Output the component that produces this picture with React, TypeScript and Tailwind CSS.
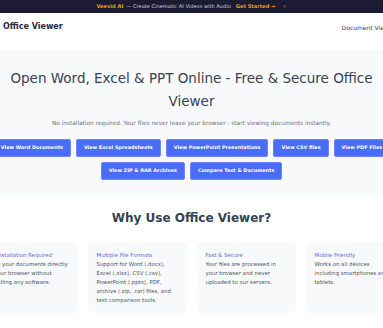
import React from "react";

const actions = [
    "View Word Documents",
    "View Excel Spreadsheets",
    "View PowerPoint Presentations",
    "View CSV files",
    "View PDF Files",
    "View ZIP & RAR Archives",
    "Compare Text & Documents",
];

const features = [
    {
        title: "No Installation Required",
        body: "View your documents directly in your browser without installing any software.",
    },
    {
        title: "Multiple File Formats",
        body: "Support for Word (.docx), Excel (.xlsx), CSV (.csv), PowerPoint (.pptx), PDF, archive (.zip, .rar) files, and text comparison tools.",
    },
    {
        title: "Fast & Secure",
        body: "Your files are processed in your browser and never uploaded to our servers.",
    },
    {
        title: "Mobile Friendly",
        body: "Works on all devices including smartphones and tablets.",
    },
];

export default function App() {
    return (
        <div className="w-[383px] h-[328px] overflow-hidden bg-white font-['DejaVu_Sans',sans-serif] flex flex-col">
            {/* Promo banner */}
            <div className="h-[13px] shrink-0 bg-[#1c1b33] flex items-center justify-center gap-[3px] text-[5.1px] leading-none">
                <span className="font-bold text-[#f59e0b]">Veevid AI</span>
                <span className="text-[#d1d5db]">— Create Cinematic AI Videos with Audio</span>
                <span className="font-bold text-[#f59e0b] ml-[2px]">Get Started →</span>
                <span className="text-[#6b7280] ml-[4px]">×</span>
            </div>

            {/* Header */}
            <header className="h-[28px] shrink-0 flex items-center justify-between pl-[3px]">
                <span className="text-[8px] font-bold text-[#1f2937]">Office Viewer</span>
                <span className="text-[6px] text-[#374151] whitespace-nowrap mr-[-12px]">Document Viewer</span>
            </header>

            {/* Hero */}
            <section className="mt-[10px] shrink-0 bg-[#f8f9fb] flex flex-col items-center pt-[16px] pb-[16px]">
                <h1 className="px-[6px] text-center text-[13.5px] leading-[23px] text-[#374151]">
                    Open Word, Excel &amp; PPT Online - Free &amp; Secure Office Viewer
                </h1>
                <p className="mt-[6px] text-[5.8px] leading-[9px] text-[#6b7280] whitespace-nowrap">
                    No installation required. Your files never leave your browser - start viewing documents instantly.
                </p>
                <div className="mt-[11px] w-[412px] shrink-0 flex flex-wrap justify-center gap-[5px]">
                    {actions.map((b) => (
                        <span
                            key={b}
                            className="h-[18px] px-[7px] flex items-center rounded-[2px] bg-[#4a6cf7] border border-[#6b86f8] text-white text-[4.9px] font-bold whitespace-nowrap"
                        >
                            {b}
                        </span>
                    ))}
                </div>
            </section>

            {/* Features */}
            <section className="flex flex-col items-center pt-[14px]">
                <h2 className="text-[12px] leading-[16px] font-bold text-[#334155]">Why Use Office Viewer?</h2>
                <div className="mt-[17px] w-[426px] shrink-0 grid grid-cols-4 gap-[10px]">
                    {features.map((f) => (
                        <div key={f.title} className="h-[70px] rounded-[4px] bg-[#f8f9fb] px-[9px] pt-[8px]">
                            <div className="text-[5.4px] leading-[9px] text-[#5b6fd6]">{f.title}</div>
                            <p className="text-[5.4px] leading-[9px] text-[#4b5563]">{f.body}</p>
                        </div>
                    ))}
                </div>
            </section>
        </div>
    );
}
